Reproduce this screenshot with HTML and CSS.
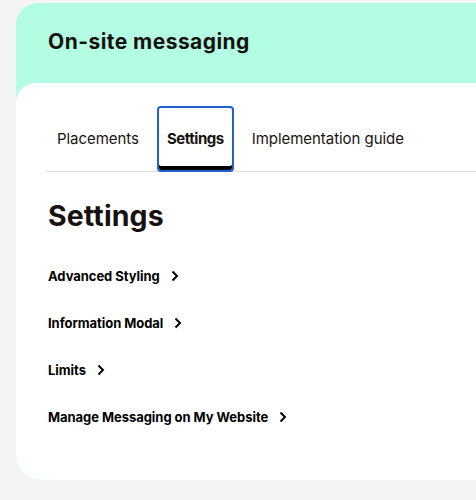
FILE: index.html
```html
<!DOCTYPE html>
<html lang="en">
<head>
	<meta charset="utf-8" />
	<title>On-site messaging - Settings</title>
	<link rel="stylesheet" href="styles.css">
</head>
<body>
	<div class="card">
		<div class="card-head">
			<h1>On-site messaging</h1>
		</div>
		<div class="panel">
			<div class="tabs">
				<a class="tab" href="#placements">Placements</a>
				<a class="tab active" href="#settings">Settings</a>
				<a class="tab" href="#guide">Implementation guide</a>
			</div>
			<h2>Settings</h2>
			<ul class="links">
				<li><a href="#styling">Advanced Styling <svg class="chev" viewBox="0 0 8 12"><path d="M1.5 1.5L6 6l-4.5 4.5"/></svg></a></li>
				<li><a href="#modal">Information Modal <svg class="chev" viewBox="0 0 8 12"><path d="M1.5 1.5L6 6l-4.5 4.5"/></svg></a></li>
				<li><a href="#limits">Limits <svg class="chev" viewBox="0 0 8 12"><path d="M1.5 1.5L6 6l-4.5 4.5"/></svg></a></li>
				<li><a href="#manage">Manage Messaging on My Website <svg class="chev" viewBox="0 0 8 12"><path d="M1.5 1.5L6 6l-4.5 4.5"/></svg></a></li>
			</ul>
		</div>
	</div>
</body>
</html>
```

FILE: styles.css
```css
* {
	box-sizing: border-box;
}

html,
body {
	margin: 0;
	height: 100%;
}

body {
	background-color: #f4f4f4;
	font-family: Inter, "Liberation Sans", sans-serif;
	color: #17120f;
	padding: 3px 0 0 16px;
	overflow: hidden;
}

/* green card with the white panel laid over it */
.card {
	background-color: #b3fde3;
	border-radius: 22px 0 0 24px;
	overflow: hidden;
}

.card-head {
	height: 80px;
	padding: 26px 32px 0;
}

.card-head h1 {
	margin: 0;
	font-size: 21px;
	font-weight: 700;
	letter-spacing: 0.45px;
	line-height: 26px;
}

.panel {
	background-color: white;
	border-radius: 20px 0 0 24px;
	height: 397px;
	padding: 23px 0 0 32px;
}

/* tab strip */
.tabs {
	display: flex;
	gap: 8px;
	border-bottom: 1px solid #dedede;
	padding-left: 1px;
	margin-left: -2px;
}

.tab {
	display: block;
	height: 66px;
	margin-bottom: -1px;
	padding: 0 8px;
	border: 2px solid transparent;
	border-radius: 4px;
	font-size: 15px;
	line-height: 62px;
	color: #17120f;
	text-decoration: none;
	letter-spacing: -0.05px;
}

.tab.active {
	font-weight: 700;
	letter-spacing: -0.45px;
	border-color: #1f5fd1;
	box-shadow: inset 0 -4px 0 #000;
}

h2 {
	margin: 26px 0 0;
	font-size: 28.5px;
	font-weight: 700;
	line-height: 36px;
	letter-spacing: 0.1px;
}

.links {
	list-style: none;
	margin: 31px 0 0;
	padding: 0;
}

.links li {
	height: 47px;
}

.links a {
	display: inline-flex;
	align-items: center;
	gap: 11px;
	font-size: 13px;
	font-weight: 700;
	line-height: 20px;
	color: #000;
	text-decoration: none;
	letter-spacing: -0.05px;
}

.chev {
	width: 8px;
	height: 12px;
	fill: none;
	stroke: #000;
	stroke-width: 2;
}
```
